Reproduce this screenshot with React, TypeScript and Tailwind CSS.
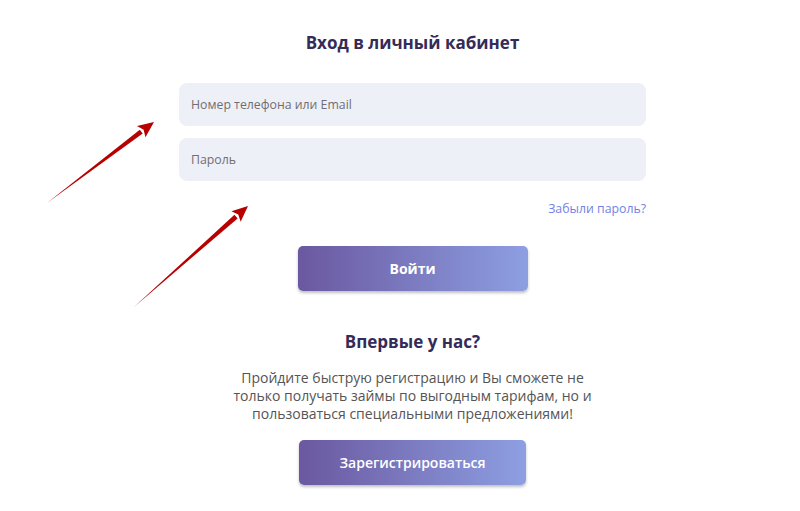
import React from 'react';

const font = { fontFamily: '"Open Sans", "Noto Sans", sans-serif' };

function Arrow({ x1, y1, x2, y2 }: { x1: number; y1: number; x2: number; y2: number }) {
  const dx = x2 - x1;
  const dy = y2 - y1;
  const len = Math.hypot(dx, dy);
  const ux = dx / len;
  const uy = dy / len;
  const px = -uy;
  const py = ux;
  const headLen = 16;
  const headW = 7;
  const bx = x2 - ux * headLen;
  const by = y2 - uy * headLen;
  const shaft = `${x1},${y1} ${bx + px * 2.4},${by + py * 2.4} ${bx - px * 2.4},${by - py * 2.4}`;
  const head = `${x2},${y2} ${bx + px * headW},${by + py * headW} ${bx + ux * 3},${by + uy * 3} ${bx - px * headW},${by - py * headW}`;
  return (
    <>
      <polygon points={shaft} fill="#b70000" />
      <polygon points={head} fill="#b70000" />
    </>
  );
}

export default function App() {
  return (
    <div className="relative w-[800px] h-[511px] bg-white overflow-hidden" style={font}>
      <div className="ml-[179px] w-[467px] flex flex-col items-center pt-[31px]">
        <h1 className="text-[17px] leading-[24px] font-bold text-[#352b58]">Вход в личный кабинет</h1>

        <div className="w-full mt-[28px] flex flex-col gap-[12px]">
          <input
            className="w-full h-[43px] rounded-[8px] bg-[#eef0f7] px-[12px] text-[12.3px] text-[#555] placeholder:text-[#6f6f73] outline-none"
            placeholder="Номер телефона или Email"
          />
          <input
            type="password"
            className="w-full h-[43px] rounded-[8px] bg-[#eef0f7] px-[12px] text-[12.3px] text-[#555] placeholder:text-[#6f6f73] outline-none"
            placeholder="Пароль"
          />
        </div>

        <div className="w-full flex justify-end mt-[19px]">
          <a className="text-[12.3px] leading-[18px] text-[#6f83e6] cursor-pointer">Забыли пароль?</a>
        </div>

        <button className="mt-[28px] w-[230px] h-[45px] rounded-[5px] bg-gradient-to-r from-[#6a58a0] to-[#8d9fe2] text-white text-[14px] font-bold shadow-[0_2px_3px_rgba(0,0,0,0.25)]">
          Войти
        </button>

        <h2 className="mt-[39px] text-[17px] leading-[24px] font-bold text-[#352b58]">Впервые у нас?</h2>

        <p className="mt-[15px] w-[380px] text-center text-[14px] leading-[18px] text-[#555]">
          Пройдите быструю регистрацию и Вы сможете не только получать займы по выгодным тарифам, но и пользоваться специальными предложениями!
        </p>

        <button className="mt-[17px] w-[227px] h-[45px] rounded-[5px] bg-gradient-to-r from-[#6a58a0] to-[#8d9fe2] text-white text-[14px] font-semibold shadow-[0_2px_3px_rgba(0,0,0,0.25)]">
          Зарегистрироваться
        </button>
      </div>

      <svg className="absolute left-0 top-0 pointer-events-none" width="800" height="511">
        <Arrow x1={47} y1={203} x2={154} y2={122} />
        <Arrow x1={134} y1={307} x2={248} y2={206} />
      </svg>
    </div>
  );
}
